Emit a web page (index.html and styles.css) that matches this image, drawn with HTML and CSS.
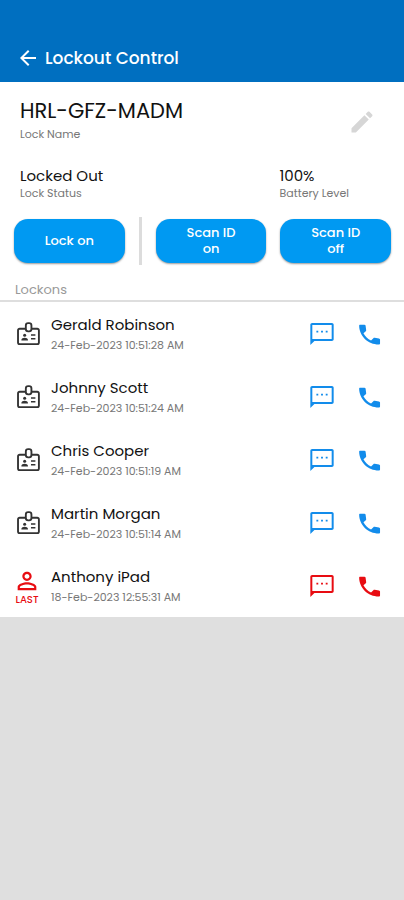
FILE: index.html
```html
<!DOCTYPE html>
<html lang="en">
<head>
<meta charset="utf-8">
<meta name="viewport" content="width=device-width, initial-scale=1">
<title>Lockout Control</title>
<link rel="stylesheet" href="styles.css">
</head>
<body>
<svg class="sprite" aria-hidden="true">
  <symbol id="badge" viewBox="-1 0 24 24">
    <g fill="none" stroke="currentColor" stroke-width="1.600">
      <path d="M10 7.500H4.700c-.8 0-1.400.6-1.400 1.400v10.400c0 .8.6 1.400 1.400 1.400h15.100c.8 0 1.400-.6 1.400-1.400V8.900c0-.8-.6-1.400-1.400-1.400H15"/>
      <rect x="10" y="2.700" width="4.800" height="7" rx="2"/>
    </g>
    <circle cx="9" cy="13" r="1.300"/>
    <path d="M6.200 17.500v-.5c0-1.200 1.400-1.800 2.800-1.800s2.800.6 2.800 1.800v.5zM14.400 12.300h3.800v1.200h-3.800zM14.400 15.500h3.800v1.200h-3.800z"/>
  </symbol>
  <symbol id="person" viewBox="0 0 24 24">
    <path d="M12 5.900c1.160 0 2.100.94 2.100 2.100s-.94 2.100-2.100 2.100S9.900 9.160 9.900 8s.94-2.100 2.100-2.100m0 9c2.970 0 6.100 1.460 6.100 2.100v1.100H5.900V17c0-.64 3.130-2.100 6.100-2.100M12 4C9.790 4 8 5.790 8 8s1.790 4 4 4 4-1.790 4-4-1.790-4-4-4zm0 9c-2.670 0-8 1.340-8 4v3h16v-3c0-2.660-5.330-4-8-4z"/>
  </symbol>
  <symbol id="sms" viewBox="0 0 24 24">
    <path fill-rule="evenodd" d="M20.500 2.500H3.500C2.700 2.500 2 3.200 2 4v17.500l3.500-3.500h15c.8 0 1.500-.7 1.500-1.500V4c0-.8-.7-1.500-1.500-1.500zM20.300 16.300H3.700V4.200h16.600z"/>
    <path d="M7.200 9.200h1.600v1.600H7.200zM11.200 9.200h1.600v1.600h-1.600zM15.200 9.200h1.600v1.600h-1.600z"/>
  </symbol>
  <symbol id="call" viewBox="0 0 24 24">
    <path d="M3.500 4h3.700c.5 0 .9.300 1 .8l.5 3.700c.1.400 0 .8-.3 1.100L6.400 11.300c1.500 2.900 3.700 4.900 6.500 6.200l2-1.900c.3-.3.700-.4 1.100-.3l3.700.5c.5.100.9.500.9 1v3.300c0 .6-.5 1-1.100 1C10.200 21.100 2.700 13.700 2.700 4.800c0-.4.3-.8.800-.8z"/>
  </symbol>
</svg>

<header class="topbar">
  <button class="icon-button" type="button" aria-label="Back">
    <svg class="back" viewBox="0 0 24 24"><path d="M20 11H7.830l5.590-5.590L12 4l-8 8 8 8 1.410-1.410L7.830 13H20z"/></svg>
  </button>
  <h1 class="title">Lockout Control</h1>
</header>

<main class="panel">
  <section class="lock">
    <div>
      <h2 class="lock-name">HRL-GFZ-MADM</h2>
      <p class="caption">Lock Name</p>
    </div>
    <button class="icon-button edit" type="button" aria-label="Edit lock name">
      <svg class="icon" viewBox="0 0 24 24"><path d="M3 17.250V21h3.750L17.810 9.940l-3.750-3.750zM20.710 7.040c.39-.39.39-1.020 0-1.410l-2.340-2.340c-.39-.39-1.020-.39-1.410 0l-1.830 1.830 3.750 3.750z"/></svg>
    </button>
  </section>

  <section class="stats">
    <div>
      <p class="value">Locked Out</p>
      <p class="caption">Lock Status</p>
    </div>
    <div class="battery">
      <p class="value">100%</p>
      <p class="caption">Battery Level</p>
    </div>
  </section>

  <section class="actions">
    <button class="action" type="button">Lock on</button>
    <span class="divider"></span>
    <button class="action" type="button">Scan ID<br>on</button>
    <button class="action" type="button">Scan ID<br>off</button>
  </section>

  <h3 class="list-title">Lockons</h3>
  <ul class="list">
    <li class="row">
      <span class="kind"><svg class="icon"><use href="#badge"/></svg></span>
      <div class="who"><p class="name">Gerald Robinson</p><p class="time">24-Feb-2023 10:51:28 AM</p></div>
      <button class="icon-button" type="button" aria-label="Message Gerald Robinson"><svg class="icon"><use href="#sms"/></svg></button>
      <button class="icon-button" type="button" aria-label="Call Gerald Robinson"><svg class="icon"><use href="#call"/></svg></button>
    </li>
    <li class="row">
      <span class="kind"><svg class="icon"><use href="#badge"/></svg></span>
      <div class="who"><p class="name">Johnny Scott</p><p class="time">24-Feb-2023 10:51:24 AM</p></div>
      <button class="icon-button" type="button" aria-label="Message Johnny Scott"><svg class="icon"><use href="#sms"/></svg></button>
      <button class="icon-button" type="button" aria-label="Call Johnny Scott"><svg class="icon"><use href="#call"/></svg></button>
    </li>
    <li class="row">
      <span class="kind"><svg class="icon"><use href="#badge"/></svg></span>
      <div class="who"><p class="name">Chris Cooper</p><p class="time">24-Feb-2023 10:51:19 AM</p></div>
      <button class="icon-button" type="button" aria-label="Message Chris Cooper"><svg class="icon"><use href="#sms"/></svg></button>
      <button class="icon-button" type="button" aria-label="Call Chris Cooper"><svg class="icon"><use href="#call"/></svg></button>
    </li>
    <li class="row">
      <span class="kind"><svg class="icon"><use href="#badge"/></svg></span>
      <div class="who"><p class="name">Martin Morgan</p><p class="time">24-Feb-2023 10:51:14 AM</p></div>
      <button class="icon-button" type="button" aria-label="Message Martin Morgan"><svg class="icon"><use href="#sms"/></svg></button>
      <button class="icon-button" type="button" aria-label="Call Martin Morgan"><svg class="icon"><use href="#call"/></svg></button>
    </li>
    <li class="row last">
      <span class="kind"><svg class="icon"><use href="#person"/></svg><span class="tag">LAST</span></span>
      <div class="who"><p class="name">Anthony iPad</p><p class="time">18-Feb-2023 12:55:31 AM</p></div>
      <button class="icon-button" type="button" aria-label="Message Anthony iPad"><svg class="icon"><use href="#sms"/></svg></button>
      <button class="icon-button" type="button" aria-label="Call Anthony iPad"><svg class="icon"><use href="#call"/></svg></button>
    </li>
  </ul>
</main>
</body>
</html>
```
FILE: styles.css
```css
* {
  box-sizing: border-box;
}

body,
h1,
h2,
h3,
p,
ul {
  margin: 0;
  padding: 0;
}

body {
  background: #dfdfdf;
  color: #111;
  font-family: Poppins, Inter, sans-serif;
}

button {
  font-family: inherit;
  border: 0;
  cursor: pointer;
}

.sprite {
  display: none;
}

.icon-button {
  display: flex;
  padding: 0;
  background: none;
  color: inherit;
}

.icon {
  display: block;
  width: 28px;
  height: 28px;
  fill: currentColor;
}

.topbar {
  display: flex;
  align-items: center;
  gap: 5px;
  padding: 46px 16px 12px;
  background: #006fc0;
  color: #fff;
}

.back {
  width: 24px;
  height: 24px;
  fill: currentColor;
}

.title {
  font-size: 17px;
  line-height: 24px;
  font-weight: 500;
}

.panel {
  background: #fff;
}

.lock {
  display: flex;
  align-items: flex-end;
  justify-content: space-between;
  padding: 14px 28px 0 20px;
}

.lock-name {
  font-size: 21px;
  line-height: 30px;
  font-weight: 400;
}

.edit {
  padding-bottom: 6px;
  color: #d6d6d6;
}

.caption {
  font-size: 11px;
  line-height: 16px;
  color: #777;
}

.stats {
  display: flex;
  justify-content: space-between;
  padding: 24px 55px 16px 20px;
}

.value {
  font-size: 15px;
  line-height: 19px;
}

.actions {
  display: flex;
  align-items: center;
  gap: 14px;
  padding: 0 13px 0 14px;
}

.action {
  flex: 1;
  height: 44px;
  padding: 0;
  border-radius: 14px;
  background: #0099f2;
  box-shadow: 0 1px 2px rgba(0, 0, 0, 0.4);
  color: #fff;
  font-size: 13px;
  line-height: 16px;
  font-weight: 500;
}

.divider {
  width: 3px;
  height: 48px;
  background: #dcdcdc;
}

.list-title {
  padding: 15px 15px 0;
  border-bottom: 2px solid #dedede;
  color: #999;
  font-size: 13px;
  line-height: 20px;
  font-weight: 400;
}

.list {
  list-style: none;
}

.row {
  display: flex;
  align-items: center;
  height: 63px;
  padding: 0 20px 0 13px;
  color: #128ceb;
}

.row .icon-button + .icon-button {
  margin-left: 20px;
}

.kind {
  display: flex;
  flex-direction: column;
  align-items: center;
  width: 28px;
  margin-right: 10px;
  color: #333;
}

.who {
  flex: 1;
}

.name {
  color: #111;
  font-size: 15px;
  line-height: 22px;
}

.time {
  color: #777;
  font-size: 11px;
  line-height: 18px;
}

.last,
.last .kind {
  color: #e80c12;
}

.tag {
  font-size: 10px;
  line-height: 10px;
  font-weight: 500;
}
```
